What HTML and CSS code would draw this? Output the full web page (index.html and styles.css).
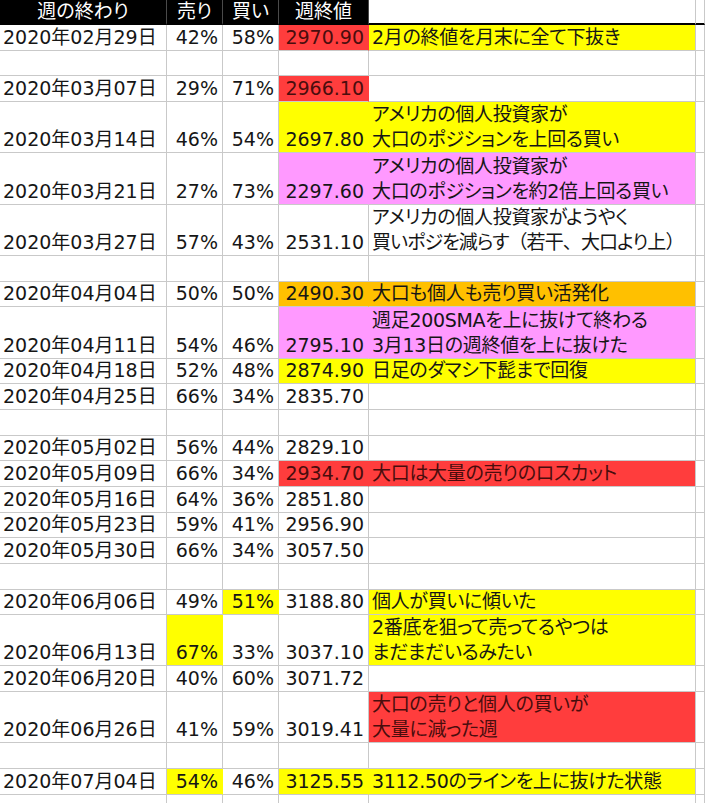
FILE: index.html
```html
<!DOCTYPE html>
<html lang="ja">
<head>
<meta charset="utf-8">
<title>週終値</title>
<link rel="stylesheet" href="styles.css">
</head>
<body>
<div class="sheet">
  <div class="row head">
    <div class="c h">週の終わり</div>
    <div class="c h">売り</div>
    <div class="c h">買い</div>
    <div class="c h">週終値</div>
    <div class="c hw"></div>
    <div class="c hw"></div>
  </div>

  <div class="row">
    <div class="c d">2020年02月29日</div><div class="c n">42%</div><div class="c n">58%</div><div class="c n red">2970.90</div><div class="c t yellow"><span>2月の終値を月末に全て下抜き</span></div><div class="c"></div>
  </div>
  <div class="row">
    <div class="c"></div><div class="c"></div><div class="c"></div><div class="c"></div><div class="c"></div><div class="c"></div>
  </div>
  <div class="row">
    <div class="c d">2020年03月07日</div><div class="c n">29%</div><div class="c n">71%</div><div class="c n red">2966.10</div><div class="c t"></div><div class="c"></div>
  </div>
  <div class="row r2">
    <div class="c d">2020年03月14日</div><div class="c n">46%</div><div class="c n">54%</div><div class="c n yellow">2697.80</div><div class="c t yellow"><span>アメリカの個人投資家が</span><span>大口のポジションを上回る買い</span></div><div class="c"></div>
  </div>
  <div class="row r2">
    <div class="c d">2020年03月21日</div><div class="c n">27%</div><div class="c n">73%</div><div class="c n pink">2297.60</div><div class="c t pink"><span>アメリカの個人投資家が</span><span>大口のポジションを約2倍上回る買い</span></div><div class="c"></div>
  </div>
  <div class="row r2">
    <div class="c d">2020年03月27日</div><div class="c n">57%</div><div class="c n">43%</div><div class="c n">2531.10</div><div class="c t"><span>アメリカの個人投資家がようやく</span><span class="tight">買いポジを減らす<b class="np">（</b>若干<b class="np">、</b>大口より上<b class="np">）</b></span></div><div class="c"></div>
  </div>
  <div class="row">
    <div class="c"></div><div class="c"></div><div class="c"></div><div class="c"></div><div class="c"></div><div class="c"></div>
  </div>
  <div class="row">
    <div class="c d">2020年04月04日</div><div class="c n">50%</div><div class="c n">50%</div><div class="c n orange">2490.30</div><div class="c t orange"><span>大口も個人も売り買い活発化</span></div><div class="c"></div>
  </div>
  <div class="row r2">
    <div class="c d">2020年04月11日</div><div class="c n">54%</div><div class="c n">46%</div><div class="c n pink">2795.10</div><div class="c t pink"><span>週足200SMAを上に抜けて終わる</span><span>3月13日の週終値を上に抜けた</span></div><div class="c"></div>
  </div>
  <div class="row">
    <div class="c d">2020年04月18日</div><div class="c n">52%</div><div class="c n">48%</div><div class="c n yellow">2874.90</div><div class="c t yellow"><span>日足のダマシ下髭まで回復</span></div><div class="c"></div>
  </div>
  <div class="row">
    <div class="c d">2020年04月25日</div><div class="c n">66%</div><div class="c n">34%</div><div class="c n">2835.70</div><div class="c t"></div><div class="c"></div>
  </div>
  <div class="row">
    <div class="c"></div><div class="c"></div><div class="c"></div><div class="c"></div><div class="c"></div><div class="c"></div>
  </div>
  <div class="row">
    <div class="c d">2020年05月02日</div><div class="c n">56%</div><div class="c n">44%</div><div class="c n">2829.10</div><div class="c t"></div><div class="c"></div>
  </div>
  <div class="row">
    <div class="c d">2020年05月09日</div><div class="c n">66%</div><div class="c n">34%</div><div class="c n red">2934.70</div><div class="c t red"><span>大口は大量の売りのロスカット</span></div><div class="c"></div>
  </div>
  <div class="row">
    <div class="c d">2020年05月16日</div><div class="c n">64%</div><div class="c n">36%</div><div class="c n">2851.80</div><div class="c t"></div><div class="c"></div>
  </div>
  <div class="row">
    <div class="c d">2020年05月23日</div><div class="c n">59%</div><div class="c n">41%</div><div class="c n">2956.90</div><div class="c t"></div><div class="c"></div>
  </div>
  <div class="row">
    <div class="c d">2020年05月30日</div><div class="c n">66%</div><div class="c n">34%</div><div class="c n">3057.50</div><div class="c t"></div><div class="c"></div>
  </div>
  <div class="row">
    <div class="c"></div><div class="c"></div><div class="c"></div><div class="c"></div><div class="c"></div><div class="c"></div>
  </div>
  <div class="row">
    <div class="c d">2020年06月06日</div><div class="c n">49%</div><div class="c n yellow">51%</div><div class="c n">3188.80</div><div class="c t yellow"><span>個人が買いに傾いた</span></div><div class="c"></div>
  </div>
  <div class="row r2">
    <div class="c d">2020年06月13日</div><div class="c n yellow">67%</div><div class="c n">33%</div><div class="c n">3037.10</div><div class="c t yellow"><span>2番底を狙って売ってるやつは</span><span>まだまだいるみたい</span></div><div class="c"></div>
  </div>
  <div class="row">
    <div class="c d">2020年06月20日</div><div class="c n">40%</div><div class="c n">60%</div><div class="c n">3071.72</div><div class="c t"></div><div class="c"></div>
  </div>
  <div class="row r2">
    <div class="c d">2020年06月26日</div><div class="c n">41%</div><div class="c n">59%</div><div class="c n">3019.41</div><div class="c t red"><span>大口の売りと個人の買いが</span><span>大量に減った週</span></div><div class="c"></div>
  </div>
  <div class="row">
    <div class="c"></div><div class="c"></div><div class="c"></div><div class="c"></div><div class="c"></div><div class="c"></div>
  </div>
  <div class="row">
    <div class="c d">2020年07月04日</div><div class="c n yellow">54%</div><div class="c n">46%</div><div class="c n yellow">3125.55</div><div class="c t yellow"><span>3112.50のラインを上に抜けた状態</span></div><div class="c"></div>
  </div>
  <div class="row">
    <div class="c"></div><div class="c"></div><div class="c"></div><div class="c"></div><div class="c"></div><div class="c"></div>
  </div>
</div>
</body>
</html>
```

FILE: styles.css
```css
html, body {
  margin: 0;
  padding: 0;
  background: #ffffff;
}

.sheet {
  width: 705px;
  height: 803px;
  overflow: hidden;
  font-family: "DejaVu Sans", "Noto Sans CJK JP", sans-serif;
  font-size: 19px;
  color: #161616;
  font-feature-settings: "palt";
}

.row {
  display: grid;
  grid-template-columns: 167px 56px 56px 90px 327px 1fr;
  height: 25.67px;
}

.row.r2 {
  height: 51.33px;
}

.c {
  box-sizing: border-box;
  border-right: 1px solid #c9c9c9;
  border-bottom: 1px solid #c9c9c9;
  display: flex;
  flex-direction: column;
  justify-content: flex-end;
  line-height: 25px;
  white-space: nowrap;
  overflow: hidden;
  padding: 0 3px 0 3px;
}

.np {
  font-weight: normal;
  font-feature-settings: normal;
}

.head {
  height: 25px;
}

.c.h {
  background: #000000;
  color: #ffffff;
  border-right-color: #4a4a4a;
  border-bottom: 2px solid #000000;
  align-items: center;
  justify-content: center;
  line-height: 23px;
}

.c.hw {
  border-bottom: 2px solid #000000;
}

.c.d {
  align-items: flex-start;
  padding-left: 3px;
}

.c.n {
  align-items: flex-end;
  padding-right: 4px;
}

.c.t {
  align-items: flex-start;
  padding-left: 3px;
  letter-spacing: -0.3px;
}

.c.t .tight {
  letter-spacing: -0.9px;
}

.red {
  background: #ff3d3d;
  color: #4a0d0d;
  border-right-color: #ff3d3d;
}

.yellow {
  background: #ffff00;
  border-right-color: #ffff00;
}

.pink {
  background: #ff99ff;
  border-right-color: #ff99ff;
}

.orange {
  background: #ffc000;
  border-right-color: #ffc000;
}

.c.t.yellow, .c.t.pink, .c.t.orange, .c.t.red {
  border-right-color: #c9c9c9;
}
```
